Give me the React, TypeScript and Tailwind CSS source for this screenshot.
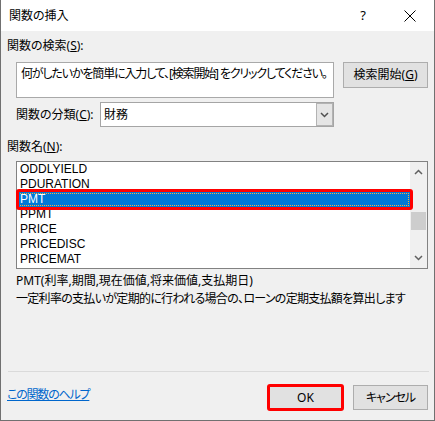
import React from 'react';

const functions = ['ODDLYIELD', 'PDURATION', 'PMT', 'PPMT', 'PRICE', 'PRICEDISC', 'PRICEMAT'];

const Chevron: React.FC<{ up?: boolean; className?: string }> = ({ up, className }) => (
  <svg width="9" height="6" viewBox="0 0 9 6" className={className}>
    <path
      d={up ? 'M1 5 L4.5 1.5 L8 5' : 'M1 1 L4.5 4.5 L8 1'}
      fill="none"
      stroke="currentColor"
      strokeWidth="1.5"
    />
  </svg>
);

const InsertFunctionDialog: React.FC = () => {
  const selected = 'PMT';

  return (
    <div className="w-[435px] h-[421px] bg-[#f0f0f0] border-x border-b border-[#707070] flex flex-col text-[12px] text-black font-['Noto_Sans','Noto_Sans_CJK_JP',sans-serif] [font-feature-settings:'palt']">
      {/* title bar */}
      <div className="h-[31px] bg-white flex items-center shrink-0">
        <span className="ml-[8px] leading-[16px]">関数の挿入</span>
        <span className="ml-auto w-[46px] text-center text-[13px]">?</span>
        <span className="w-[48px] flex items-center justify-center">
          <svg width="12" height="12" viewBox="0 0 12 12">
            <path d="M0.5 0.5 L11.5 11.5 M11.5 0.5 L0.5 11.5" stroke="#000" strokeWidth="1" />
          </svg>
        </span>
      </div>

      <div className="flex flex-col">
        <div className="mt-[7px] ml-[6px] leading-[16px]">
          関数の検索(<span className="underline">S</span>):
        </div>

        <div className="mt-[8px] ml-[15px] flex items-start">
          <div className="w-[318px] h-[36px] bg-white border border-[#a9a9a9] pl-[4px] pt-[3px] leading-[16px] tracking-[-1.15px] whitespace-nowrap overflow-hidden">
            何がしたいかを簡単に入力して、[検索開始] をクリックしてください。
          </div>
          <button className="ml-[9px] w-[85px] h-[26px] bg-[#e1e1e1] border border-[#adadad] leading-[16px]">
            検索開始(<span className="underline">G</span>)
          </button>
        </div>

        <div className="mt-[4px] ml-[15px] flex items-center">
          <span className="w-[84px] leading-[16px]">
            関数の分類(<span className="underline">C</span>):
          </span>
          <div className="w-[234px] h-[25px] bg-white border border-[#a5a5a5] flex">
            <span className="flex-1 pl-[3px] leading-[23px]">財務</span>
            <span className="w-[17px] h-full bg-[#e5e5e5] border border-[#b3b3b3] flex items-center justify-center text-[#505050]">
              <Chevron />
            </span>
          </div>
        </div>

        <div className="mt-[12px] ml-[6px] leading-[16px]">
          関数名(<span className="underline">N</span>):
        </div>

        <div className="mt-[6px] ml-[15px] w-[412px] h-[108px] bg-white border border-[#828282] flex">
          <ul className="flex-1 font-['Liberation_Sans',sans-serif]">
            {functions.map((name) => (
              <li
                key={name}
                className={
                  name === selected
                    ? 'relative h-[15px] leading-[15px] pl-[3px] bg-[#0078d7] text-white'
                    : 'h-[15px] leading-[15px] pl-[3px]'
                }
              >
                {name}
                {name === selected && (
                  <>
                    <span className="absolute inset-[1px] border border-dotted border-[#f5b041]" />
                    <span className="absolute -left-[1px] -right-[3px] -top-[3px] -bottom-[3px] border-[3px] border-[#ff0000] rounded-[3px] z-10" />
                  </>
                )}
              </li>
            ))}
          </ul>
          <div className="w-[17px] bg-[#f0f0f0] flex flex-col items-center text-[#606060]">
            <Chevron up className="mt-[7px]" />
            <div className="mt-[37px] w-[15px] h-[18px] bg-[#cdcdcd]" />
            <Chevron className="mt-auto mb-[7px]" />
          </div>
        </div>

        <div className="mt-[3px] ml-[15px] leading-[18px]">PMT(利率,期間,現在価値,将来価値,支払期日)</div>
        <div className="ml-[15px] leading-[18px] tracking-[-0.7px] whitespace-nowrap">
          一定利率の支払いが定期的に行われる場合の、ローンの定期支払額を算出します
        </div>

        <div className="mt-[63px] ml-[7px] w-[421px] h-px bg-[#dadada]" />

        <div className="mt-[13px] flex items-start">
          <a className="ml-[6px] mt-[2px] text-[#0066cc] underline leading-[16px] tracking-[-1.2px]">この関数のヘルプ</a>
          <button className="relative ml-auto w-[75px] h-[25px] bg-[#e1e1e1] border-2 border-[#0078d7]">
            OK
            <span className="absolute -inset-[3px] border-[3px] border-[#ff0000] rounded-[3px]" />
          </button>
          <button className="ml-[10px] mr-[6px] w-[75px] h-[25px] bg-[#e1e1e1] border border-[#adadad] tracking-[-1px]">
            キャンセル
          </button>
        </div>
      </div>
    </div>
  );
};

export default function App() {
  return <InsertFunctionDialog />;
}
